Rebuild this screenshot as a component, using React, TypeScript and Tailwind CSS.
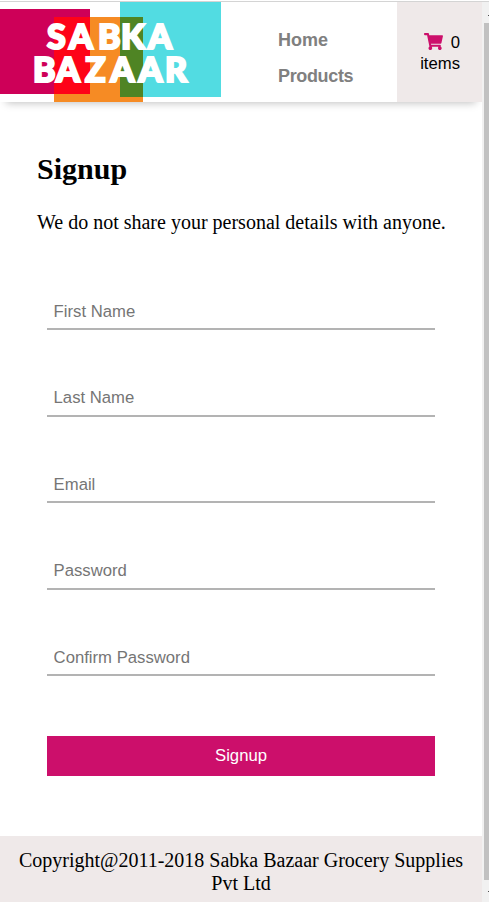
import React from 'react';
import { FaShoppingCart } from 'react-icons/fa';

const fields = [
  { label: 'First Name', type: 'text' },
  { label: 'Last Name', type: 'text' },
  { label: 'Email', type: 'email' },
  { label: 'Password', type: 'password' },
  { label: 'Confirm Password', type: 'password' },
];

function Logo() {
  return (
    <svg className="block h-[100px] w-[222px] shrink-0" viewBox="0 2 222 100">
      <rect x="0" y="9" width="90" height="85" fill="#ce0058" />
      <rect x="54" y="17" width="89" height="85" fill="#f68b24" />
      <rect x="54" y="17" width="36" height="77" fill="#fe0318" />
      <rect x="120" y="2" width="101" height="95" fill="#52dce2" />
      <rect x="120" y="17" width="23" height="80" fill="#4f8424" />
      <g fill="#fff" stroke="#fff" strokeWidth="2.2" className="font-['Lato'] text-[34px] font-black">
        <text x="47 69 98 121 148" y="49">SABKA</text>
        <text x="33 56 85 110.5 138.5 165" y="82">BAZAAR</text>
      </g>
    </svg>
  );
}

function Header() {
  return (
    <header className="flex h-[100px] bg-white shadow-[0_7px_8px_-6px_rgba(0,0,0,0.25)]">
      <Logo />
      <nav className="ml-[56px] flex w-[119px] flex-col pt-[20px] font-['Liberation_Sans',sans-serif] text-[18px] leading-[36px] font-bold text-[#808080]">
        <a>Home</a>
        <a className="tracking-[-0.35px]">Products</a>
      </nav>
      <div className="flex-1 bg-[#efe9e9] pt-[30px] pr-[22px] text-right font-['Liberation_Sans',sans-serif] text-[16.7px] leading-[21px] text-black">
        <div className="flex items-center justify-end gap-[8px]">
          <FaShoppingCart className="-mt-[2px] h-[17px] w-[19px] text-[#cc0f6b]" preserveAspectRatio="none" />
          <span>0</span>
        </div>
        <div>items</div>
      </div>
    </header>
  );
}

function Scrollbar() {
  return (
    <div className="flex w-[7px] shrink-0 flex-col items-end bg-[#f1f1f1]">
      <div className="flex h-[21px] w-[2px] items-center justify-end">
        <span className="mt-[6px] h-px w-px bg-[#505050]" />
      </div>
      <div className="h-[857px] w-[5px] bg-[#c1c1c1]" />
      <div className="flex flex-1 items-center">
        <span className="h-px w-px bg-[#505050]" />
      </div>
    </div>
  );
}

export default function App() {
  return (
    <div className="flex h-[902px] w-[489px] flex-col overflow-hidden bg-white font-['Liberation_Serif',serif] text-black">
      <div className="h-[2px] shrink-0 border-b border-[#d4d4d4]" />
      <div className="flex flex-1">
        <div className="flex w-[482px] flex-col">
          <Header />
          <main className="flex-1 pl-[37px]">
            <h1 className="mt-[50px] text-[30px] leading-[34px] font-bold">Signup</h1>
            <p className="mt-[25px] text-[20px] leading-[23px] whitespace-nowrap">We do not share your personal details with anyone.</p>
            <form className="ml-[10px] flex w-[388px] flex-col pt-[56px] font-['Liberation_Sans',sans-serif]">
              {fields.map((field) => (
                <div key={field.label} className="h-[86.5px]">
                  <input
                    type={field.type}
                    placeholder={field.label}
                    className="block h-[40px] w-full border-b-2 border-[#b3b3b3] bg-transparent px-[6.6px] pt-[5px] text-[16.7px] outline-none placeholder:text-[#757575]"
                  />
                </div>
              ))}
              <button type="button" className="mt-[13.5px] h-[40px] bg-[#cc0f6b] text-[16.7px] text-white">Signup</button>
            </form>
          </main>
          <footer className="h-[66px] bg-[#efe9e9] px-[10px] pt-[13px] text-center text-[20px] leading-[23px]">
            Copyright@2011-2018 Sabka Bazaar Grocery Supplies Pvt Ltd
          </footer>
        </div>
        <Scrollbar />
      </div>
    </div>
  );
}
